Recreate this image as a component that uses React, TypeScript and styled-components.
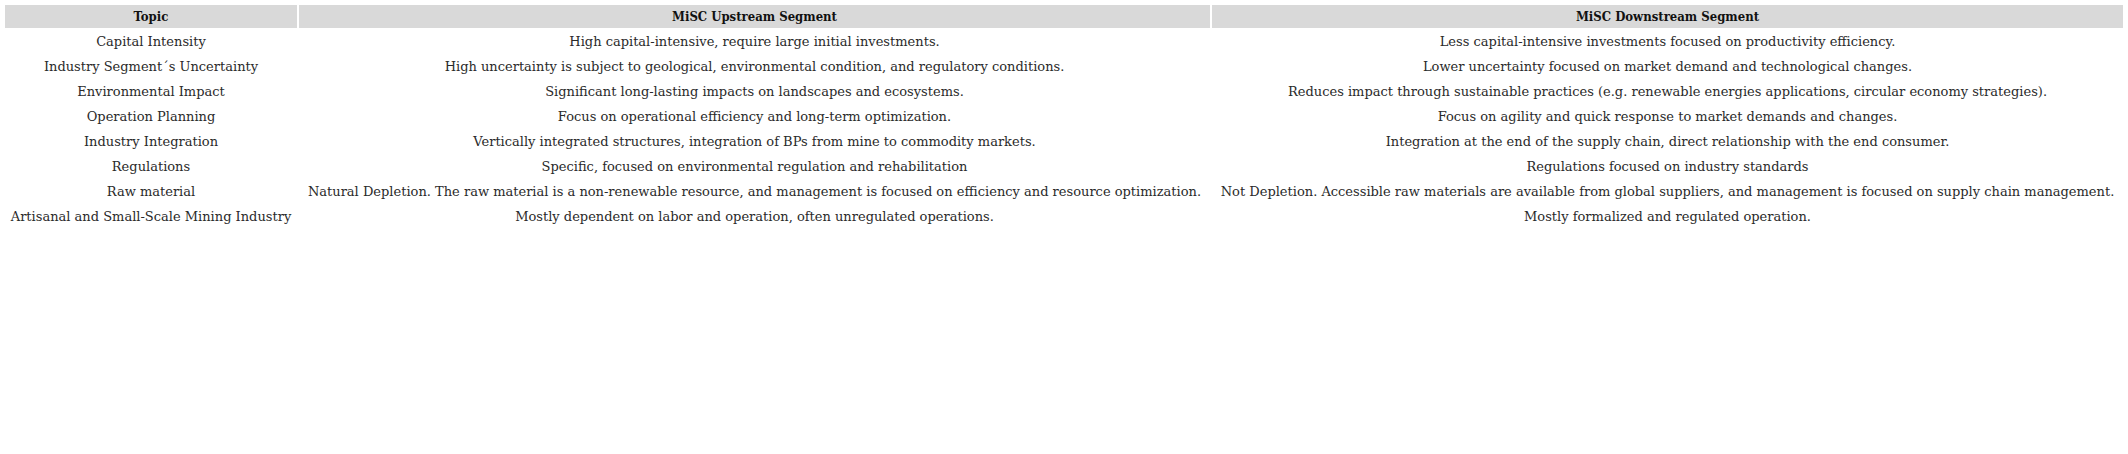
import React from 'react';
import styled, { createGlobalStyle } from 'styled-components';

const GlobalStyle = createGlobalStyle`
  body {
    margin: 3px;
    background: #ffffff;
    font-family: "DejaVu Serif", "Liberation Serif", serif;
  }
`;

interface Row {
  topic: string;
  upstream: string;
  downstream: string;
}

const rows: Row[] = [
  {
    topic: 'Capital Intensity',
    upstream: 'High capital-intensive, require large initial investments.',
    downstream: 'Less capital-intensive investments focused on productivity efficiency.',
  },
  {
    topic: 'Industry Segment´s Uncertainty',
    upstream: 'High uncertainty is subject to geological, environmental condition, and regulatory conditions.',
    downstream: 'Lower uncertainty focused on market demand and technological changes.',
  },
  {
    topic: 'Environmental Impact',
    upstream: 'Significant long-lasting impacts on landscapes and ecosystems.',
    downstream: 'Reduces impact through sustainable practices (e.g. renewable energies applications, circular economy strategies).',
  },
  {
    topic: 'Operation Planning',
    upstream: 'Focus on operational efficiency and long-term optimization.',
    downstream: 'Focus on agility and quick response to market demands and changes.',
  },
  {
    topic: 'Industry Integration',
    upstream: 'Vertically integrated structures, integration of BPs from mine to commodity markets.',
    downstream: 'Integration at the end of the supply chain, direct relationship with the end consumer.',
  },
  {
    topic: 'Regulations',
    upstream: 'Specific, focused on environmental regulation and rehabilitation',
    downstream: 'Regulations focused on industry standards',
  },
  {
    topic: 'Raw material',
    upstream: 'Natural Depletion. The raw material is a non-renewable resource, and management is focused on efficiency and resource optimization.',
    downstream: 'Not Depletion. Accessible raw materials are available from global suppliers, and management is focused on supply chain management.',
  },
  {
    topic: 'Artisanal and Small-Scale Mining Industry',
    upstream: 'Mostly dependent on labor and operation, often unregulated operations.',
    downstream: 'Mostly formalized and regulated operation.',
  },
];

const Table = styled.table`
  width: 100%;
  border-collapse: separate;
  border-spacing: 2px;
  table-layout: fixed;
`;

const Col = styled.col<{ $width: number }>`
  width: ${(p) => p.$width}px;
`;

const HeadCell = styled.th`
  background: #d9d9d9;
  color: #111;
  font-family: "DejaVu Serif", serif;
  font-stretch: condensed;
  font-weight: 700;
  font-size: 13px;
  line-height: 21px;
  padding: 1px;
  text-align: center;
`;

const Cell = styled.td`
  color: #2a2a2a;
  font-family: "DejaVu Serif", serif;
  font-weight: 400;
  font-size: 13px;
  line-height: 21px;
  padding: 1px;
  text-align: center;
  white-space: nowrap;
`;

export default function App() {
  return (
    <>
      <GlobalStyle />
      <Table>
        <colgroup>
          <Col $width={292} />
          <Col $width={911} />
          <Col $width={911} />
        </colgroup>
        <thead>
          <tr>
            <HeadCell>Topic</HeadCell>
            <HeadCell>MiSC Upstream Segment</HeadCell>
            <HeadCell>MiSC Downstream Segment</HeadCell>
          </tr>
        </thead>
        <tbody>
          {rows.map((row) => (
            <tr key={row.topic}>
              <Cell>{row.topic}</Cell>
              <Cell>{row.upstream}</Cell>
              <Cell>{row.downstream}</Cell>
            </tr>
          ))}
        </tbody>
      </Table>
    </>
  );
}
